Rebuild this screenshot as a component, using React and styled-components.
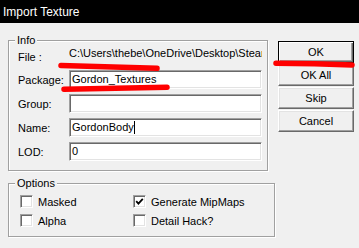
import React from 'react'
import styled, { createGlobalStyle, css } from 'styled-components'

const GlobalStyle = createGlobalStyle`
  body {
    margin: 0;
    background: #f0f0f0;
    font-family: "Liberation Sans", Arial, sans-serif;
  }
`

const sunken = css`
  box-sizing: border-box;
  background: #fff;
  border: 1px solid;
  border-color: #a0a0a0 #fff #fff #a0a0a0;
  box-shadow: inset 1px 1px 0 #696969, inset -1px -1px 0 #e3e3e3;
`

const Window = styled.div`
  position: relative;
  width: 359px;
  height: 248px;
  background: #f0f0f0;
  overflow: hidden;
  font-size: 11px;
  color: #000;
`

const TitleBar = styled.div`
  height: 23px;
  background: #000;
  color: #fff;
  font-size: 12px;
  display: flex;
  align-items: center;
  padding-left: 3px;
`

const Body = styled.div`
  display: grid;
  grid-template-columns: 260px 76px;
  column-gap: 10px;
  padding: 11px 0 0 8px;
`

const Group = styled.fieldset`
  margin: 0;
  padding: 0;
  min-width: 0;
  width: ${(p) => p.$width}px;
  box-sizing: border-box;
  border: 1px solid #a0a0a0;
  box-shadow: 1px 1px 0 #fff, inset 1px 1px 0 #fff;
  grid-column: ${(p) => (p.$wide ? '1 / span 2' : 'auto')};
  margin-top: ${(p) => p.$top || 0}px;
`

const Legend = styled.legend`
  margin-left: 6px;
  padding: 0 2px;
  line-height: 13px;
  background: #f0f0f0;
`

const InfoGrid = styled.div`
  display: grid;
  grid-template-columns: 51px 193px;
  grid-template-rows: 17px repeat(4, 19px);
  row-gap: 5px;
  padding: 1px 4px 9px 9px;
  align-items: center;
`

const Label = styled.span`
  white-space: nowrap;
`

const PathText = styled.span`
  white-space: nowrap;
  overflow: hidden;
  align-self: start;
  margin-top: -1px;
`

const Field = styled.div`
  ${sunken};
  height: 19px;
  padding-left: 2px;
  line-height: 17px;
  white-space: nowrap;
  overflow: hidden;
`

const Caret = styled.span`
  display: inline-block;
  width: 1px;
  height: 13px;
  background: #000;
  vertical-align: -3px;
`

const Buttons = styled.div`
  display: flex;
  flex-direction: column;
  gap: 1px;
  margin-top: 7px;
`

const Button = styled.button`
  box-sizing: border-box;
  height: 22px;
  width: 76px;
  padding: 0;
  font: inherit;
  color: #000;
  background: #f0f0f0;
  border: 1px solid;
  border-color: ${(p) => (p.$default ? '#000' : '#fff #696969 #696969 #fff')};
  box-shadow: ${(p) =>
    p.$default
      ? 'inset 1px 1px 0 #fff, inset -1px -1px 0 #696969, inset -2px -2px 0 #a0a0a0'
      : 'inset -1px -1px 0 #a0a0a0, inset 1px 1px 0 #e3e3e3'};
`

const OptionsGrid = styled.div`
  display: grid;
  grid-template-columns: 113px 113px;
  grid-auto-rows: 13px;
  row-gap: 6px;
  padding: 5px 0 9px 11px;
`

const Check = styled.label`
  display: flex;
  align-items: center;
  gap: 5px;
  white-space: nowrap;
`

const Box = styled.span`
  ${sunken};
  width: 13px;
  height: 13px;
  display: flex;
  align-items: center;
  justify-content: center;
  flex: none;
`

const Marks = styled.svg`
  position: absolute;
  left: 0;
  top: 0;
  pointer-events: none;
`

const CheckBox = ({ label, checked }) => (
  <Check>
    <Box>
      {checked && (
        <svg width="9" height="9" viewBox="0 0 9 9">
          <path d="M1.2 4.2 L3.4 6.6 L7.8 1.8" fill="none" stroke="#000" strokeWidth="1.8" />
        </svg>
      )}
    </Box>
    {label}
  </Check>
)

const App = () => {
  return (
    <Window>
      <GlobalStyle />
      <TitleBar>Import Texture</TitleBar>
      <Body>
        <Group $width={260}>
          <Legend>Info</Legend>
          <InfoGrid>
            <Label>File :</Label>
            <PathText>C:\Users\thebe\OneDrive\Desktop\Steam\Half-Life</PathText>
            <Label>Package:</Label>
            <Field>Gordon_Textures</Field>
            <Label>Group:</Label>
            <Field />
            <Label>Name:</Label>
            <Field>
              GordonBody
              <Caret />
            </Field>
            <Label>LOD:</Label>
            <Field>0</Field>
          </InfoGrid>
        </Group>
        <Buttons>
          <Button $default>OK</Button>
          <Button>OK All</Button>
          <Button>Skip</Button>
          <Button>Cancel</Button>
        </Buttons>
        <Group $width={267} $wide $top={6}>
          <Legend>Options</Legend>
          <OptionsGrid>
            <CheckBox label="Masked" />
            <CheckBox label="Generate MipMaps" checked />
            <CheckBox label="Alpha" />
            <CheckBox label="Detail Hack?" />
          </OptionsGrid>
        </Group>
      </Body>
      <Marks width="359" height="248">
        <g fill="none" stroke="#f00" strokeWidth="5.5" strokeLinecap="round">
          <path d="M61 65.5 Q105 66.8 157 68.3" />
          <path d="M64 89.3 Q115 88.2 167 87.3" />
          <path d="M276 63.3 Q315 63.4 352 65" />
        </g>
      </Marks>
    </Window>
  )
}

export default App
